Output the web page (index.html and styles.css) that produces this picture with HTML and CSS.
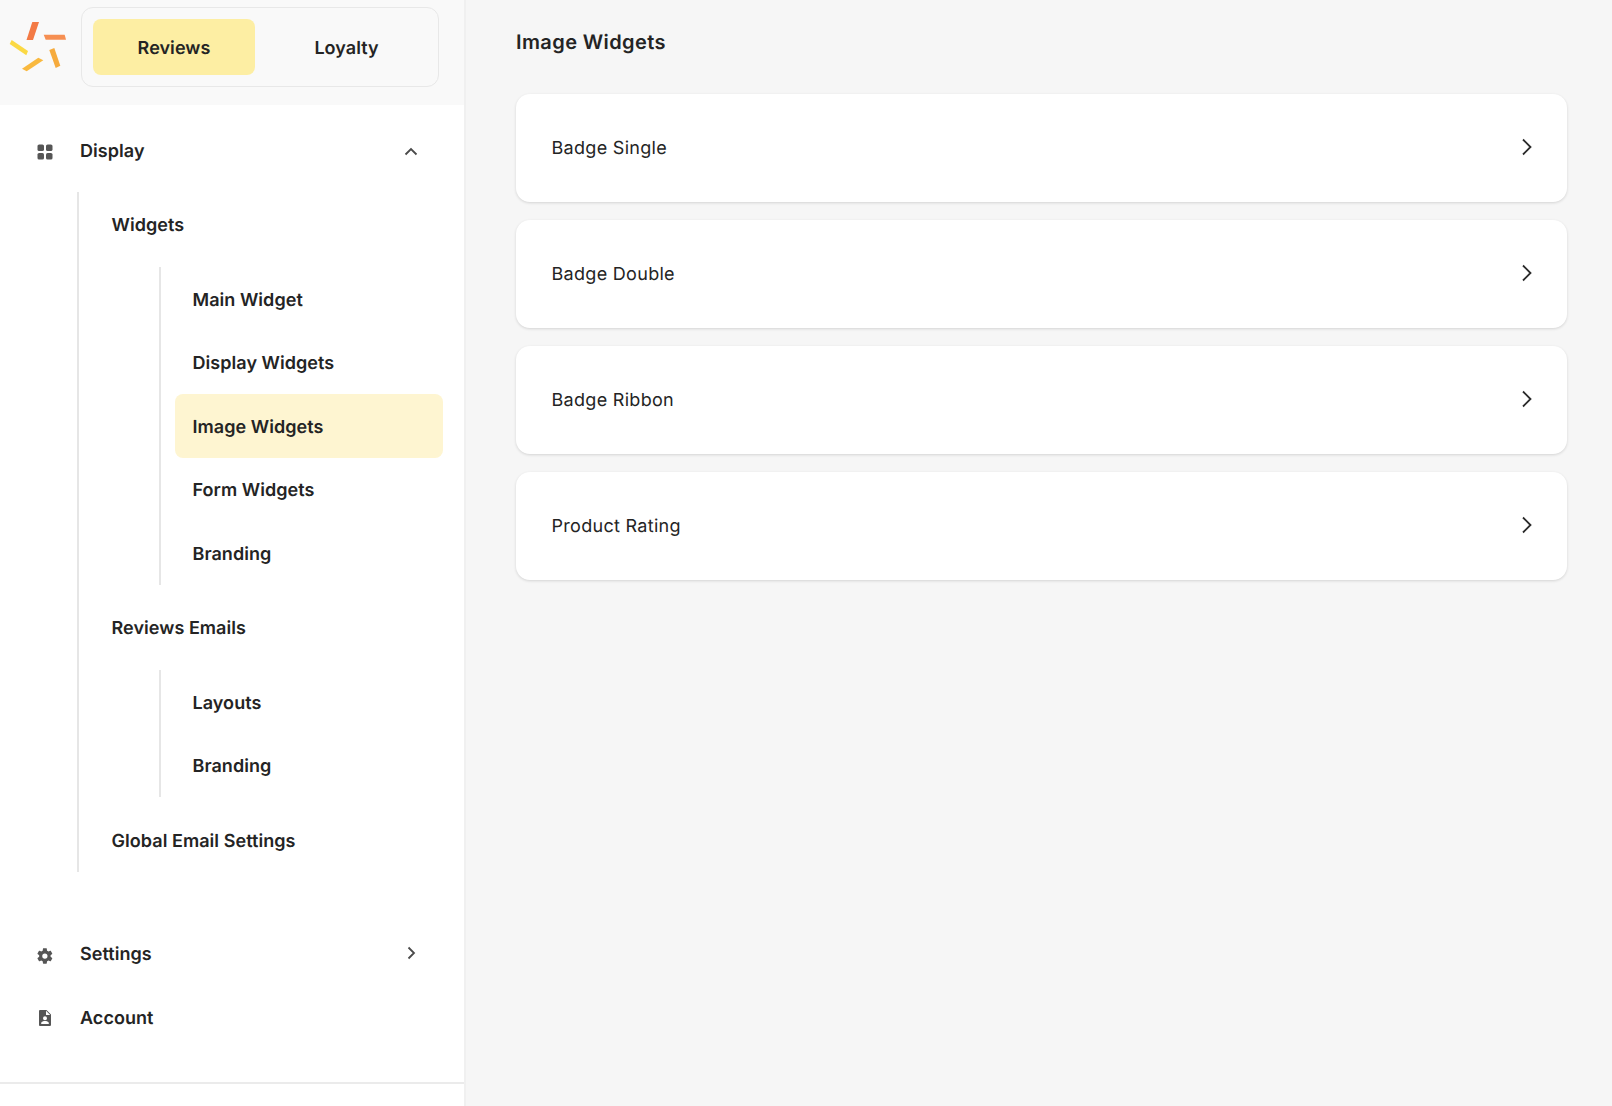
FILE: index.html
```html
<!DOCTYPE html>
<html lang="en">
<head>
    <meta charset="UTF-8">
    <meta name="viewport" content="width=device-width, initial-scale=1.0">
    <title>Image Widgets</title>
    <link rel="stylesheet" href="styles.css">
</head>
<body>
    <div class="layout">
        <aside class="sidebar">
            <!-- Logo and product switch -->
            <div class="sidebar-top">
                <svg class="logo" width="72" height="80" viewBox="0 0 72 80">
                    <polygon fill="#f37a45" points="32.3,22 39,22 33,40 26.5,40"/>
                    <polygon fill="#f68f52" points="43.7,34.7 64.7,34.7 66,39.7 45.7,39.7"/>
                    <polygon fill="#f6ab3d" points="49.3,50 54.3,48 60.3,65.7 55.7,68"/>
                    <polygon fill="#f9b93f" points="22,68.7 38.3,57.7 43.3,60.3 26.7,71.3"/>
                    <polygon fill="#fbd944" points="11.7,40 28,51 26.3,55.3 9.7,44"/>
                </svg>
                <div class="switch">
                    <div class="switch-item active">Reviews</div>
                    <div class="switch-item">Loyalty</div>
                </div>
            </div>

            <nav class="nav">
                <div class="nav-row display-row">
                    <svg class="nav-icon" width="18" height="18" viewBox="0 0 18 18">
                        <rect x="1.5" y="1.5" width="6.5" height="6.5" rx="1.6"/>
                        <rect x="10" y="1.5" width="6.5" height="6.5" rx="1.6"/>
                        <rect x="1.5" y="10" width="6.5" height="6.5" rx="1.6"/>
                        <rect x="10" y="10" width="6.5" height="6.5" rx="1.6"/>
                    </svg>
                    <span class="nav-label">Display</span>
                    <svg class="nav-chevron" width="14" height="10" viewBox="0 0 14 10">
                        <path d="M1.5 7.5 L7 2 L12.5 7.5" fill="none" stroke="#4a4a4a" stroke-width="1.8"/>
                    </svg>
                </div>

                <div class="subnav">
                    <div class="sub-row">Widgets</div>
                    <div class="subsubnav">
                        <div class="leaf">Main Widget</div>
                        <div class="leaf">Display Widgets</div>
                        <div class="leaf active">Image Widgets</div>
                        <div class="leaf">Form Widgets</div>
                        <div class="leaf">Branding</div>
                    </div>
                    <div class="sub-row">Reviews Emails</div>
                    <div class="subsubnav">
                        <div class="leaf">Layouts</div>
                        <div class="leaf">Branding</div>
                    </div>
                    <div class="sub-row">Global Email Settings</div>
                </div>

                <div class="nav-row settings-row">
                    <svg class="nav-icon gear-icon" width="18" height="18" viewBox="0 0 24 24">
                        <path d="M19.4 13c.04-.32.06-.66.06-1s-.02-.68-.07-1l2.16-1.68c.2-.15.25-.42.13-.64l-2.05-3.54c-.12-.22-.38-.3-.6-.22l-2.55 1.02c-.53-.4-1.1-.74-1.73-1L14.36 2.2c-.04-.24-.24-.42-.5-.42H9.8c-.25 0-.46.18-.5.42l-.38 2.72c-.62.26-1.2.6-1.73 1L4.64 4.9c-.23-.08-.49 0-.6.22L1.99 8.66c-.13.22-.07.49.12.64L4.27 11c-.05.32-.07.66-.07 1s.02.68.07 1l-2.16 1.68c-.2.15-.25.42-.12.64l2.05 3.54c.12.22.37.3.6.22l2.55-1.02c.53.4 1.1.74 1.73 1l.38 2.72c.04.24.25.42.5.42h4.06c.26 0 .46-.18.5-.42l.38-2.72c.62-.26 1.2-.6 1.73-1l2.55 1.02c.23.08.48 0 .6-.22l2.05-3.54c.12-.22.07-.49-.13-.64L19.4 13zM11.83 15.5a3.5 3.5 0 1 1 0-7 3.5 3.5 0 0 1 0 7z"/>
                    </svg>
                    <span class="nav-label">Settings</span>
                    <svg class="nav-chevron" width="10" height="14" viewBox="0 0 10 14">
                        <path d="M2.5 1.5 L8 7 L2.5 12.5" fill="none" stroke="#4a4a4a" stroke-width="1.8"/>
                    </svg>
                </div>
                <div class="nav-row">
                    <svg class="nav-icon" width="18" height="18" viewBox="0 0 18 18">
                        <path fill-rule="evenodd" d="M4.2 1h6.3L15 5.5v10.2c0 .8-.6 1.3-1.3 1.3H4.2c-.7 0-1.2-.5-1.2-1.3V2.3C3 1.5 3.500 1 4.200 1zM10 1.800V6h4.200zM9 7.200a2 2 0 1 0 0 4 2 2 0 0 0 0-4zM5.200 14.900h7.600v-1c0-1.300-2.500-1.900-3.800-1.900s-3.800.6-3.800 1.900z"/>
                    </svg>
                    <span class="nav-label">Account</span>
                </div>
            </nav>

            <div class="sidebar-footer"></div>
        </aside>

        <main class="main">
            <h1 class="page-title">Image Widgets</h1>
            <div class="card-list">
                <div class="card">
                    <span>Badge Single</span>
                    <svg width="14" height="18" viewBox="0 0 14 18"><path d="M3 1.500 L10.500 9 L3 16.500" fill="none" stroke="#2b2b2b" stroke-width="1.800"/></svg>
                </div>
                <div class="card">
                    <span>Badge Double</span>
                    <svg width="14" height="18" viewBox="0 0 14 18"><path d="M3 1.500 L10.500 9 L3 16.500" fill="none" stroke="#2b2b2b" stroke-width="1.800"/></svg>
                </div>
                <div class="card">
                    <span>Badge Ribbon</span>
                    <svg width="14" height="18" viewBox="0 0 14 18"><path d="M3 1.500 L10.500 9 L3 16.500" fill="none" stroke="#2b2b2b" stroke-width="1.800"/></svg>
                </div>
                <div class="card">
                    <span>Product Rating</span>
                    <svg width="14" height="18" viewBox="0 0 14 18"><path d="M3 1.500 L10.500 9 L3 16.500" fill="none" stroke="#2b2b2b" stroke-width="1.800"/></svg>
                </div>
            </div>
        </main>
    </div>
</body>
</html>
```

FILE: styles.css
```css
* {
    box-sizing: border-box;
}
body {
    margin: 0;
    font-family: Inter, "Liberation Sans", sans-serif;
    color: #242424;
    background-color: #f6f6f6;
    text-rendering: geometricPrecision;
}
.layout {
    display: flex;
    height: 1106px;
    overflow: hidden;
}
.sidebar {
    width: 466px;
    flex-shrink: 0;
    display: flex;
    flex-direction: column;
    background-color: white;
    border-right: 2px solid #f0f0f0;
    letter-spacing: 0.05px;
}
.sidebar-top {
    height: 105px;
    display: flex;
    align-items: flex-start;
    background-color: #f9f9f9;
}
.logo {
    flex-shrink: 0;
    margin-right: 9px;
}
.switch {
    width: 358px;
    height: 80px;
    margin-top: 7px;
    padding: 11px;
    display: flex;
    border: 1px solid #e8e8e8;
    border-radius: 12px;
}
.switch-item {
    display: flex;
    align-items: center;
    justify-content: center;
    flex: 1;
    padding-top: 2px;
    padding-left: 11px;
    font-size: 18px;
    font-weight: 600;
    border-radius: 8px;
}
.switch-item.active {
    flex: none;
    width: 162px;
    padding-left: 0;
    background-color: #fdeea3;
}
.nav {
    flex: 1;
    padding-top: 15px;
}
.nav-row {
    height: 64px;
    display: flex;
    align-items: center;
    padding-left: 36px;
    padding-right: 48px;
    font-size: 18px;
    font-weight: 600;
}
.nav-icon {
    fill: #565656;
    flex-shrink: 0;
    margin-right: 26px;
}
.gear-icon {
    margin-top: 4px;
}
.nav-label {
    flex: 1;
    padding-top: 2px;
}
.display-row {
    margin-bottom: 8px;
    padding-right: 46px;
}
.display-row .nav-label {
    padding-top: 0;
    padding-bottom: 2px;
}
.settings-row {
    margin-top: 50px;
}
.settings-row .nav-chevron {
    margin-bottom: 2px;
}
.subnav {
    margin-left: 77px;
    border-left: 2px solid #e6e6e6;
}
.sub-row {
    height: 64px;
    display: flex;
    align-items: center;
    padding-top: 3px;
    padding-left: 32.5px;
    font-size: 18px;
    font-weight: 600;
}
.subsubnav {
    margin: 11px 0 10.5px 80px;
    padding-left: 14px;
    padding-right: 21px;
    border-left: 2px solid #e6e6e6;
}
.leaf {
    height: 63.5px;
    display: flex;
    align-items: center;
    padding-top: 3px;
    padding-left: 17.5px;
    font-size: 18px;
    font-weight: 600;
    border-radius: 8px;
}
.leaf.active {
    background-color: #fef5d1;
}
.sidebar-footer {
    height: 24px;
    flex-shrink: 0;
    border-top: 2px solid #ebebeb;
}
.main {
    flex: 1;
    padding: 0 45px 0 50px;
}
.page-title {
    margin: 0;
    padding-top: 29px;
    height: 94px;
    font-size: 20px;
    line-height: 26px;
    font-weight: 600;
    letter-spacing: 0.4px;
}
.card-list {
    display: flex;
    flex-direction: column;
    gap: 18px;
}
.card {
    height: 108px;
    display: flex;
    align-items: center;
    justify-content: space-between;
    padding: 0 33px 0 35.5px;
    font-size: 18px;
    letter-spacing: 0.3px;
    background-color: white;
    border-radius: 14px;
    box-shadow: 0 1px 3px rgba(0, 0, 0, 0.14);
}
.card svg {
    margin-bottom: 2px;
}
```
